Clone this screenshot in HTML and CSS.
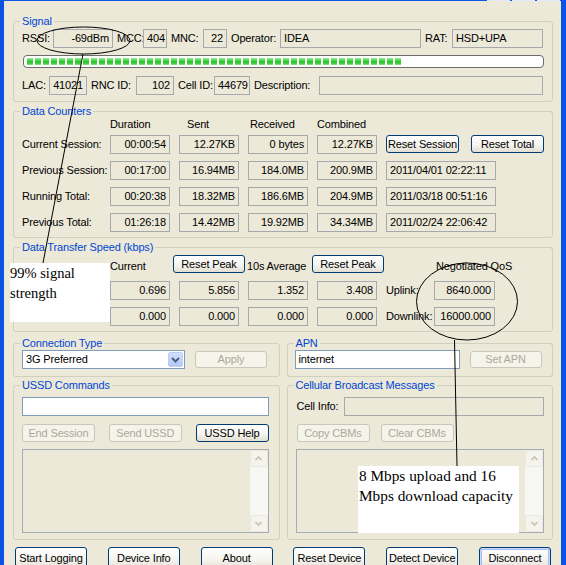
FILE: index.html
```html
<!DOCTYPE html>
<html lang="en">
<head>
    <meta charset="UTF-8">
    <meta name="viewport" content="width=device-width, initial-scale=1.0">
    <title>Connection Manager</title>
    <link rel="stylesheet" href="styles.css">
</head>
<body>
    <div class="titlebar">
        <span class="tb-btn"></span>
        <span class="tb-btn"></span>
        <span class="tb-btn"></span>
    </div>

    <div class="client">
        <!-- Signal -->
        <fieldset class="group">
            <legend>Signal</legend>
            <div class="gbody sig-body">
                <div class="sig-row1">
                    <span class="lbl flush">RSSI:</span>
                    <span class="box num">-69dBm</span>
                    <span class="lbl">MCC:</span>
                    <span class="box num">404</span>
                    <span class="lbl">MNC:</span>
                    <span class="box num">22</span>
                    <span class="lbl">Operator:</span>
                    <span class="box">IDEA</span>
                    <span class="lbl">RAT:</span>
                    <span class="box">HSD+UPA</span>
                </div>
                <div class="progress"><div class="progress-fill"></div></div>
                <div class="sig-row3">
                    <span class="lbl flush">LAC:</span>
                    <span class="box num">41021</span>
                    <span class="lbl">RNC ID:</span>
                    <span class="box num">102</span>
                    <span class="lbl">Cell ID:</span>
                    <span class="box num">44679</span>
                    <span class="lbl">Description:</span>
                    <span class="box"></span>
                </div>
            </div>
        </fieldset>

        <!-- Data Counters -->
        <fieldset class="group gap-top">
            <legend>Data Counters</legend>
            <div class="gbody dc-body">
                <div class="dc-head">
                    <span></span>
                    <span>Duration</span>
                    <span class="hd-sent">Sent</span>
                    <span class="hd-recv">Received</span>
                    <span>Combined</span>
                </div>
                <div class="dc-grid">
                    <span class="lbl flush">Current Session:</span>
                    <span class="box num">00:00:54</span>
                    <span class="box num">12.27KB</span>
                    <span class="box num">0 bytes</span>
                    <span class="box num">12.27KB</span>
                    <button class="btn">Reset Session</button>
                    <button class="btn reset-total">Reset Total</button>

                    <span class="lbl flush">Previous Session:</span>
                    <span class="box num">00:17:00</span>
                    <span class="box num">16.94MB</span>
                    <span class="box num">184.0MB</span>
                    <span class="box num">200.9MB</span>
                    <span class="box date">2011/04/01 02:22:11</span>

                    <span class="lbl flush">Running Total:</span>
                    <span class="box num">00:20:38</span>
                    <span class="box num">18.32MB</span>
                    <span class="box num">186.6MB</span>
                    <span class="box num">204.9MB</span>
                    <span class="box date">2011/03/18 00:51:16</span>

                    <span class="lbl flush">Previous Total:</span>
                    <span class="box num">01:26:18</span>
                    <span class="box num">14.42MB</span>
                    <span class="box num">19.92MB</span>
                    <span class="box num">34.34MB</span>
                    <span class="box date">2011/02/24 22:06:42</span>
                </div>
            </div>
        </fieldset>

        <!-- Data Transfer Speed -->
        <fieldset class="group gap-top">
            <legend>Data Transfer Speed (kbps)</legend>
            <div class="gbody dts-body">
                <div class="dts-head">
                    <span></span>
                    <span>Current</span>
                    <button class="btn">Reset Peak</button>
                    <span class="avg">10s Average</span>
                    <button class="btn">Reset Peak</button>
                    <span class="qos">Negotiated QoS</span>
                </div>
                <div class="dts-grid">
                    <span></span>
                    <span class="box num">0.696</span>
                    <span class="box num">5.856</span>
                    <span class="box num">1.352</span>
                    <span class="box num">3.408</span>
                    <span class="lbl flush">Uplink:</span>
                    <span class="box num">8640.000</span>

                    <span></span>
                    <span class="box num">0.000</span>
                    <span class="box num">0.000</span>
                    <span class="box num">0.000</span>
                    <span class="box num">0.000</span>
                    <span class="lbl flush">Downlink:</span>
                    <span class="box num">16000.000</span>
                </div>
            </div>
        </fieldset>

        <div class="columns">
            <div class="col">
                <fieldset class="group">
                    <legend>Connection Type</legend>
                    <div class="gbody ct-body">
                        <div class="combo">
                            <span class="combo-text">3G Preferred</span>
                            <span class="combo-btn">
                                <svg width="9" height="6" viewBox="0 0 9 6"><path d="M1 1 L4.5 4.5 L8 1" fill="none" stroke="#4d6185" stroke-width="2"/></svg>
                            </span>
                        </div>
                        <button class="btn" disabled>Apply</button>
                    </div>
                </fieldset>

                <fieldset class="group">
                    <legend>USSD Commands</legend>
                    <div class="gbody ussd-body">
                        <div class="edit"></div>
                        <div class="btn-row spread">
                            <button class="btn" disabled>End Session</button>
                            <button class="btn" disabled>Send USSD</button>
                            <button class="btn">USSD Help</button>
                        </div>
                        <div class="memo">
                            <div class="scroll">
                                <span class="scroll-btn"><svg width="7" height="5" viewBox="0 0 7 5"><path d="M0.5 4 L3.5 1 L6.5 4" fill="none" stroke="#c6c3b5" stroke-width="1.6"/></svg></span>
                                <span class="scroll-btn"><svg width="7" height="5" viewBox="0 0 7 5"><path d="M0.5 1 L3.5 4 L6.5 1" fill="none" stroke="#c6c3b5" stroke-width="1.6"/></svg></span>
                            </div>
                        </div>
                    </div>
                </fieldset>
            </div>

            <div class="col">
                <fieldset class="group">
                    <legend>APN</legend>
                    <div class="gbody apn-body">
                        <div class="edit apn-edit">internet</div>
                        <button class="btn" disabled>Set APN</button>
                    </div>
                </fieldset>

                <fieldset class="group">
                    <legend>Cellular Broadcast Messages</legend>
                    <div class="gbody cbm-body">
                        <div class="cell-row">
                            <span class="lbl cell-lbl">Cell Info:</span>
                            <span class="box"></span>
                        </div>
                        <div class="btn-row left">
                            <button class="btn" disabled>Copy CBMs</button>
                            <button class="btn" disabled>Clear CBMs</button>
                        </div>
                        <div class="memo">
                            <div class="scroll">
                                <span class="scroll-btn"><svg width="7" height="5" viewBox="0 0 7 5"><path d="M0.5 4 L3.5 1 L6.5 4" fill="none" stroke="#c6c3b5" stroke-width="1.6"/></svg></span>
                                <span class="scroll-btn"><svg width="7" height="5" viewBox="0 0 7 5"><path d="M0.5 1 L3.5 4 L6.5 1" fill="none" stroke="#c6c3b5" stroke-width="1.6"/></svg></span>
                            </div>
                        </div>
                    </div>
                </fieldset>
            </div>
        </div>

        <div class="bottom-bar">
            <button class="btn">Start Logging</button>
            <button class="btn">Device Info</button>
            <button class="btn">About</button>
            <button class="btn">Reset Device</button>
            <button class="btn">Detect Device</button>
            <button class="btn default">Disconnect</button>
        </div>
    </div>

    <!-- hand drawn notes on top of the screenshot -->
    <svg class="notes" width="566" height="565" viewBox="0 0 566 565">
        <ellipse cx="83.5" cy="40.5" rx="46.5" ry="13.5" fill="none" stroke="#000" stroke-width="1"/>
        <line x1="83" y1="54" x2="43" y2="263" stroke="#000" stroke-width="1"/>
        <ellipse cx="467" cy="301.5" rx="50.5" ry="38.5" fill="none" stroke="#000" stroke-width="1"/>
        <line x1="454.5" y1="340" x2="457" y2="466" stroke="#000" stroke-width="1"/>
    </svg>
    <div class="note note-signal">99% signal strength</div>
    <div class="note note-qos">8 Mbps upload and 16 Mbps download capacity</div>
</body>
</html>
```

FILE: styles.css
```css
* {
    box-sizing: border-box;
}

html, body {
    margin: 0;
    height: 565px;
    overflow: hidden;
}

body {
    position: relative;
    display: flex;
    flex-direction: column;
    font-family: "Liberation Sans", Arial, sans-serif;
    font-size: 11px;
    line-height: 13px;
    letter-spacing: -0.15px;
    color: #000;
    background: #0a52e2;
}

/* window frame */
.titlebar {
    height: 4px;
    display: flex;
    justify-content: flex-end;
    gap: 2px;
    padding-right: 6px;
    background: #0b56e6;
}

.tb-btn {
    width: 23px;
    background: #6f9af2;
    border: 1px solid #e4ecfc;
    border-top: none;
}

.client {
    flex: 1;
    margin: 0 5px 0 4px;
    padding: 14px 8px 0 9px;
    background: #ece9d8;
}

/* group boxes */
.group {
    margin: 0;
    padding: 0;
    min-width: 0;
    border: 1px solid #d0d0bf;
    border-radius: 3px;
}

.group legend {
    margin-left: 6px;
    padding: 0 2px;
    color: #0046d5;
}

.gap-top {
    margin-top: 3px;
}

.gbody {
    padding: 0 8px 5px 8px;
}

.lbl {
    padding-left: 4px;
    line-height: 19px;
    white-space: nowrap;
}

.lbl.flush {
    padding-left: 0;
}

.box {
    height: 19px;
    padding: 0 3px;
    border: 1px solid #a5a9ae;
    background: #ece9d8;
    line-height: 17px;
    white-space: nowrap;
    overflow: hidden;
}

.num {
    text-align: right;
}

.btn {
    width: 73px;
    height: 18px;
    padding: 0;
    font: inherit;
    letter-spacing: inherit;
    color: #000;
    border: 1px solid #003c74;
    border-radius: 3px;
    background: linear-gradient(#ffffff, #f5f4ef 55%, #e2ded3);
}

.btn:disabled {
    color: #aca899;
    border-color: #c9c7ba;
    background: #f5f4ea;
}

.edit {
    height: 19px;
    padding: 0 3px;
    border: 1px solid #7f9db9;
    background: #fff;
    line-height: 17px;
}

/* signal */
.sig-body {
    padding-top: 1px;
    padding-bottom: 6px;
}

.sig-row1 {
    display: grid;
    grid-template-columns: 31px 60px 30px 24px 36px 24px 53px 141px 31px 91px;
}

.sig-row3 {
    display: grid;
    grid-template-columns: 27px 38px 49px 38px 40px 36px 69px 224px;
}

.progress {
    width: 521px;
    height: 13px;
    margin: 7px 0 8px 1px;
    padding: 2px 3px;
    border: 1px solid #6c6c6c;
    border-radius: 4px;
    background: #fff;
}

.progress-fill {
    width: 374px;
    height: 7px;
    background:
        repeating-linear-gradient(90deg, transparent 0 6px, #fff 6px 8px),
        linear-gradient(#9be99b, #34cb34 45%, #2ec22e 70%, #8ee28e);
}

/* data counters */
.dc-head,
.dc-grid {
    display: grid;
    grid-template-columns: 79px 60px 60px 60px 60px 73px 76px;
    column-gap: 9px;
}

.dc-head {
    margin-bottom: 4px;
}

.hd-sent {
    padding-left: 8px;
}

.hd-recv {
    padding-left: 2px;
}

.dc-grid {
    grid-auto-rows: 19px;
    row-gap: 7px;
}

.reset-total {
    justify-self: end;
}

.date {
    grid-column: 6 / 8;
    width: 110px;
}

/* data transfer speed */
.dts-body {
    padding-top: 1px;
}

.dts-head {
    display: grid;
    grid-template-columns: 88px 63px 72px 67px 72px auto;
    align-items: end;
    margin-bottom: 8px;
}

.dts-head .btn {
    width: 72px;
}

.dts-head .avg {
    padding-left: 2px;
}

.dts-head .qos {
    padding-left: 52px;
    white-space: nowrap;
}

.dts-grid {
    display: grid;
    grid-template-columns: 79px 60px 60px 60px 60px 39px 61px;
    grid-auto-rows: 19px;
    column-gap: 9px;
    row-gap: 7px;
}

/* lower panels */
.columns {
    display: grid;
    grid-template-columns: 1fr 1fr;
    column-gap: 7px;
    margin-top: 5px;
}

.col {
    display: flex;
    flex-direction: column;
    gap: 2px;
}

.ct-body,
.apn-body {
    display: flex;
    align-items: center;
    gap: 10px;
    padding-bottom: 7px;
}

.apn-body {
    padding-left: 7px;
}

.ct-body .btn,
.apn-body .btn {
    width: 72px;
    height: 17px;
}

.combo {
    display: flex;
    width: 163px;
    height: 19px;
    border: 1px solid #7f9db9;
    background: #fff;
}

.combo-text {
    flex: 1;
    padding-left: 3px;
    line-height: 17px;
}

.combo-btn {
    display: flex;
    align-items: center;
    justify-content: center;
    width: 15px;
    margin: 1px;
    border: 1px solid #bccdf3;
    border-radius: 2px;
    background: linear-gradient(#d2e0fd, #b3c8f5);
}

.apn-edit {
    width: 165px;
}

.ussd-body,
.cbm-body {
    padding: 5px 8px 6px 8px;
}

.ussd-body {
    padding-right: 10px;
}

.btn-row {
    display: flex;
    margin: 8px 0 7px;
}

.btn-row.spread {
    justify-content: space-between;
}

.btn-row.left {
    gap: 11px;
    padding-left: 1px;
}

.cell-row {
    display: grid;
    grid-template-columns: 48px 1fr;
}

.cell-lbl {
    padding-left: 1px;
}

.memo {
    display: flex;
    justify-content: flex-end;
    height: 84px;
    border: 1px solid #a5acb5;
    background: #ece9d8;
}

.scroll {
    display: flex;
    flex-direction: column;
    justify-content: space-between;
    width: 18px;
    background: #f7f7f3;
}

.scroll-btn {
    display: flex;
    align-items: center;
    justify-content: center;
    height: 17px;
    border: 1px solid #ebe9df;
    border-radius: 2px;
    background: #f4f3ec;
}

.bottom-bar {
    display: flex;
    justify-content: space-between;
    margin: 7px 2px 0;
}

.bottom-bar .btn {
    width: 72px;
    height: 23px;
}

.btn.default {
    box-shadow: inset 0 0 0 1px #c9dafb, inset 0 0 0 2px #a3bff3;
}

/* annotations */
.notes {
    position: absolute;
    left: 0;
    top: 0;
    pointer-events: none;
}

.note {
    position: absolute;
    background: #fff;
    color: #000;
    font-family: "Liberation Serif", "Times New Roman", serif;
    letter-spacing: 0;
}

.note-signal {
    left: 10px;
    top: 263px;
    width: 100px;
    height: 59px;
    font-size: 14.5px;
    line-height: 20px;
}

.note-qos {
    left: 358px;
    top: 466px;
    width: 161px;
    height: 67px;
    padding-left: 1px;
    font-size: 15.3px;
    line-height: 19.5px;
}
```
